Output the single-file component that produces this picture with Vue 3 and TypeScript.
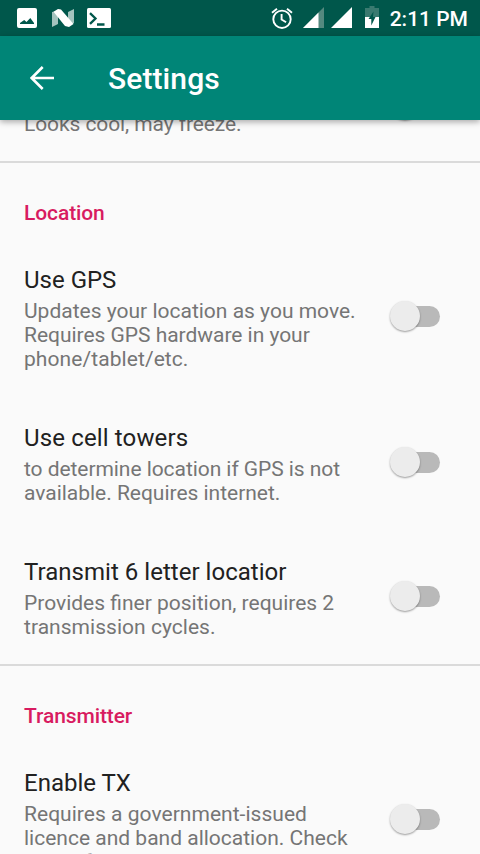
<script setup lang="ts">
interface Line {
  text: string
  tracking?: number
}
interface Preference {
  title?: string
  tracking?: number
  lines: Line[]
}
interface Section {
  heading?: string
  items: Preference[]
}

const sections: Section[] = [
  { items: [{ lines: [{ text: 'Looks cool, may freeze.', tracking: -0.09 }] }] },
  {
    heading: 'Location',
    items: [
      {
        title: 'Use GPS',
        lines: [
          { text: 'Updates your location as you move.' },
          { text: 'Requires GPS hardware in your', tracking: -0.03 },
          { text: 'phone/tablet/etc.', tracking: 0.08 },
        ],
      },
      {
        title: 'Use cell towers',
        tracking: 0.14,
        lines: [
          { text: 'to determine location if GPS is not', tracking: -0.06 },
          { text: 'available. Requires internet.', tracking: -0.02 },
        ],
      },
      {
        title: 'Transmit 6 letter locatior',
        tracking: 0.03,
        lines: [
          { text: 'Provides finer position, requires 2' },
          { text: 'transmission cycles.', tracking: 0.03 },
        ],
      },
    ],
  },
  {
    heading: 'Transmitter',
    items: [
      {
        title: 'Enable TX',
        lines: [
          { text: 'Requires a government-issued', tracking: 0.03 },
          { text: 'licence and band allocation. Check' },
          { text: 'laws of your area.' },
        ],
      },
    ],
  },
]

const spacing = (tracking = 0) => ({ letterSpacing: `${tracking}px` })
</script>

<template>
  <div class="screen">
    <header class="status">
      <div class="notifications">
        <svg width="20" height="20" viewBox="0 0 20 20">
          <path fill="#fff" fill-rule="evenodd" d="M2 0h16a2 2 0 0 1 2 2v16a2 2 0 0 1-2 2H2a2 2 0 0 1-2-2V2a2 2 0 0 1 2-2zM3 16h14v-1l-3.700-5-3.800 4-2.300-2L3 15z" />
        </svg>
        <svg width="22" height="20" viewBox="0 0 22 20">
          <path fill="#a3c3be" d="M0 4l6-1v13l-6 3zM16 4l6-3v14l-6 3z" />
          <path fill="#fff" d="M1.500 3.800L6 1l3 .5L21.500 16 17 19l-4-1z" />
        </svg>
        <svg width="24" height="20" viewBox="0 0 24 20">
          <rect width="24" height="20" rx="1.500" fill="#fff" />
          <path d="M3 5.200l5.500 5.300L3 15.800M10 16.500h7.500" fill="none" stroke="#00574b" stroke-width="2.300" />
        </svg>
      </div>
      <div class="indicators">
        <svg class="alarm" width="22" height="22" viewBox="0 0 22 22">
          <g fill="none" stroke="#fff" stroke-width="1.900">
            <circle cx="11" cy="12.300" r="8.700" />
            <path d="M1 5.700l5-4M21 5.700l-5-4M10.600 7v5.500l4.500 2.800" />
          </g>
        </svg>
        <svg class="signal" width="21" height="21" viewBox="0 0 21 21">
          <path fill="#54897f" d="M21 0v21H0z" />
          <path fill="#fff" d="M15.500 5.500V21H0z" />
        </svg>
        <svg class="signal" width="21" height="21" viewBox="0 0 21 21">
          <path fill="#fff" d="M21 0v21H0z" />
        </svg>
        <svg class="battery" width="14" height="22" viewBox="0 0 14 22">
          <path fill="#3a7a70" d="M4.500 0h5v2H14v9H0V2h4.500z" />
          <path fill="#fff" d="M0 11h14v11H0z" />
          <path fill="#00574b" d="M8.500 5.500L3.500 13H6.300v6.500L10.500 11H8z" />
        </svg>
        <span class="clock">2:11 PM</span>
      </div>
    </header>
    <div class="toolbar">
      <svg width="24" height="24" viewBox="0 0 24 24">
        <path d="M24 12H2M12.700 1L1.700 12l11 11" fill="none" stroke="#fff" stroke-width="2.600" />
      </svg>
      <h1>Settings</h1>
    </div>
    <main>
      <div class="list">
        <section v-for="(section, s) in sections" :key="s">
          <h2 v-if="section.heading">{{ section.heading }}</h2>
          <div v-for="(item, i) in section.items" :key="i" class="item" :class="{ untitled: !item.title }">
            <div class="copy">
              <h3 v-if="item.title" :style="spacing(item.tracking)">{{ item.title }}</h3>
              <p>
                <span v-for="line in item.lines" :key="line.text" :style="spacing(line.tracking)">{{ line.text }}</span>
              </p>
            </div>
            <div class="switch"><div class="thumb"></div></div>
          </div>
        </section>
      </div>
    </main>
  </div>
</template>

<style>
body { margin: 0; overflow: hidden; }
</style>

<style scoped>
.screen {
  display: flex;
  flex-direction: column;
  width: 480px;
  height: 854px;
  overflow: hidden;
  background: #fafafa;
  font-family: Roboto, sans-serif;
}
h1, h2, h3, p { margin: 0; }
.status {
  display: flex;
  flex: 0 0 36px;
  justify-content: space-between;
  box-sizing: border-box;
  padding: 0 12px 0 17px;
  background: #00574b;
}
.notifications { display: flex; gap: 15px; padding-top: 8px; }
.notifications svg:last-child { margin-left: -2px; }
.indicators { display: flex; align-items: flex-start; }
.alarm { margin: 7px 10px 0 0; }
.signal { margin: 7px 7px 0 0; }
.battery { margin: 6px 11px 0 6px; }
.clock {
  color: #fff;
  font-size: 21px;
  font-weight: 500;
  line-height: 24px;
  padding-top: 7px;
  white-space: nowrap;
}
.toolbar {
  display: flex;
  flex: 0 0 84px;
  align-items: center;
  gap: 54px;
  box-sizing: border-box;
  padding-left: 30px;
  background: #008577;
  box-shadow: 0 2px 6px rgba(0, 0, 0, 0.33);
  z-index: 1;
}
h1 {
  padding-top: 2px;
  color: #fff;
  font-size: 30px;
  font-weight: 500;
  line-height: 36px;
  letter-spacing: 0.1px;
}
main { flex: 1; min-height: 0; overflow: hidden; }
.list { margin-top: -69px; }
section + section { border-top: 2px solid #dadada; }
h2 {
  padding: 38px 24px 13px;
  color: #d81b60;
  font-size: 21px;
  font-weight: 500;
  line-height: 24px;
  letter-spacing: -0.1px;
}
.item {
  display: flex;
  align-items: center;
  justify-content: space-between;
  padding: 0 40px 0 24px;
}
.copy { padding: 28px 0 25px; }
.untitled .copy { padding-top: 56px; }
h3 {
  color: #212121;
  font-size: 24px;
  font-weight: 400;
  line-height: 28px;
  white-space: nowrap;
}
p {
  padding-top: 5px;
  color: #757575;
  font-size: 21px;
  line-height: 24px;
  white-space: nowrap;
}
p span { display: block; }
.switch {
  display: flex;
  align-items: center;
  width: 51px;
  height: 21px;
  margin-bottom: 2px;
  border-radius: 11px;
  background: linear-gradient(to right, transparent 15px, #b9b9b9 15px);
}
.thumb {
  width: 30px;
  height: 30px;
  flex: none;
  margin-left: 0.5px;
  border-radius: 50%;
  background: #ececec;
  box-shadow: 0 1px 2px rgba(0, 0, 0, 0.38);
}
</style>
